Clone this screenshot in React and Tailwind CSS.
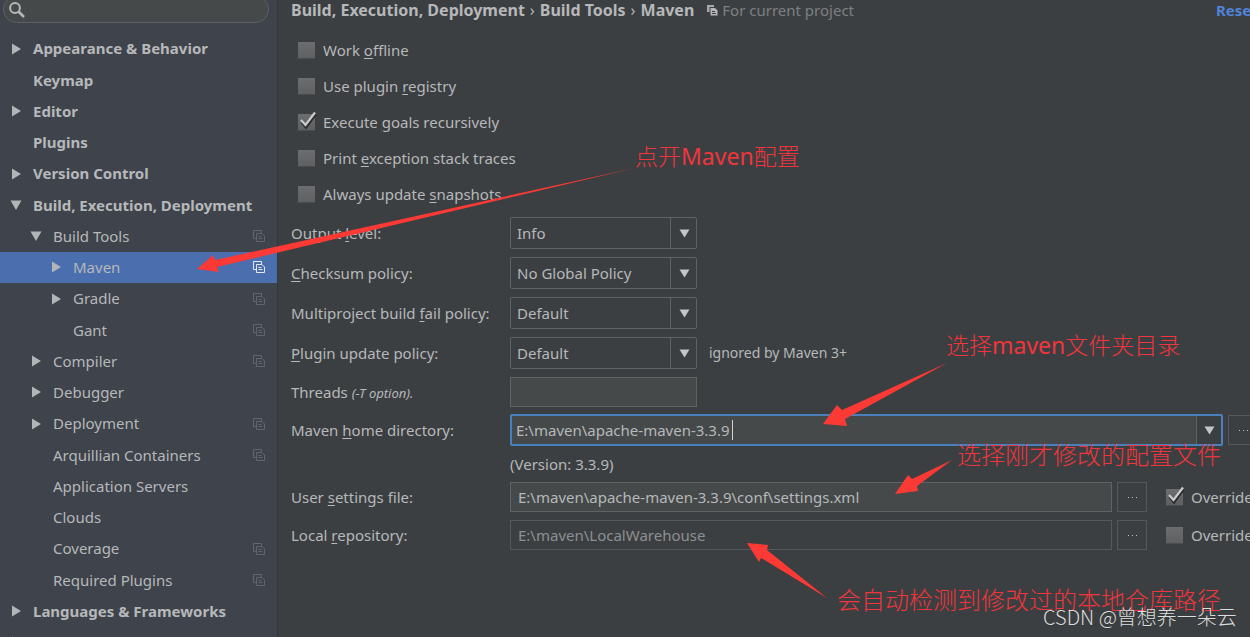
import { useState } from 'react';

const treeItems = [
  { label: 'Appearance & Behavior', level: 0, arrow: 'right' },
  { label: 'Keymap', level: 0 },
  { label: 'Editor', level: 0, arrow: 'right' },
  { label: 'Plugins', level: 0 },
  { label: 'Version Control', level: 0, arrow: 'right' },
  { label: 'Build, Execution, Deployment', level: 0, arrow: 'down' },
  { label: 'Build Tools', level: 1, arrow: 'down', project: true },
  { label: 'Maven', level: 2, arrow: 'right', project: true },
  { label: 'Gradle', level: 2, arrow: 'right', project: true },
  { label: 'Gant', level: 2, project: true },
  { label: 'Compiler', level: 1, arrow: 'right', project: true },
  { label: 'Debugger', level: 1, arrow: 'right' },
  { label: 'Deployment', level: 1, arrow: 'right', project: true },
  { label: 'Arquillian Containers', level: 1, project: true },
  { label: 'Application Servers', level: 1 },
  { label: 'Clouds', level: 1 },
  { label: 'Coverage', level: 1, project: true },
  { label: 'Required Plugins', level: 1, project: true },
  { label: 'Languages & Frameworks', level: 0, arrow: 'right' },
  { label: 'Tools', level: 0, arrow: 'right' },
];

const levelStyles = ['pl-[10px] font-bold', 'pl-[30px]', 'pl-[50px]'];

const checks = [
  { id: 'offline', text: ['Work ', 'o', 'ffline'] },
  { id: 'registry', text: ['Use plugin ', 'r', 'egistry'] },
  { id: 'recursive', text: ['Execute ', 'g', 'oals recursively'], checked: true },
  { id: 'traces', text: ['Print ', 'e', 'xception stack traces'] },
  { id: 'snapshots', text: ['Always update ', 's', 'napshots'] },
];

const selects = [
  { id: 'output', text: ['Output ', 'l', 'evel:'], value: 'Info' },
  { id: 'checksum', text: ['', 'C', 'hecksum policy:'], value: 'No Global Policy' },
  { id: 'fail', text: ['Multiproject build ', 'f', 'ail policy:'], value: 'Default' },
  { id: 'update', text: ['', 'P', 'lugin update policy:'], value: 'Default', hint: 'ignored by Maven 3+' },
];

function Mnemonic({ text }) {
  return (
    <>
      {text[0]}
      <span className="underline underline-offset-2">{text[1]}</span>
      {text[2]}
    </>
  );
}

function TreeArrow({ dir }) {
  return (
    <svg className="w-3 h-3 shrink-0" viewBox="0 0 12 12" fill="#b2b5b8">
      {dir === 'right' && <path d="M2 0.5 L11 6 L2 11.5 Z" />}
      {dir === 'down' && <path d="M0.5 1.5 H11.5 L6 11 Z" />}
    </svg>
  );
}

function ProjectIcon({ className }) {
  return (
    <svg className={className} viewBox="0 0 12 12" fill="none" stroke="currentColor">
      <path d="M3 8.5 H0.5 V0.5 H8.5 V3" />
      <path d="M3.5 3.5 H9 L11.5 6 V11.5 H3.5 Z M5.5 6.5 H8.5 M5.5 8.5 H9.5" />
    </svg>
  );
}

function CheckBox({ id, text, checked }) {
  const [on, setOn] = useState(Boolean(checked));
  return (
    <div className="flex items-center gap-2 whitespace-nowrap">
      <span className="relative w-[17px] h-[17px] shrink-0">
        <input
          id={id}
          type="checkbox"
          checked={on}
          onChange={(e) => setOn(e.target.checked)}
          className="block w-full h-full appearance-none bg-linear-to-b from-[#6b6d6e] to-[#5e6061] border-b border-[#4a4d4e]"
        />
        {on && (
          <svg className="absolute -top-1 left-0 w-5 h-5 pointer-events-none" viewBox="0 0 20 20" fill="none">
            <path d="M3.5 12 L8 17.5 L17.5 4.5" stroke="#2a2c2d" strokeWidth="2.5" />
            <path d="M3 10 L7.5 15 L17 2.5" stroke="#c9cbcc" strokeWidth="2.2" />
          </svg>
        )}
      </span>
      <label htmlFor={id}>
        <Mnemonic text={text} />
      </label>
    </div>
  );
}

function DownArrow() {
  return (
    <svg className="w-[11px] h-[9px]" viewBox="0 0 11 9" fill="#c3c5c6">
      <path d="M0.5 0.5 H10.5 L5.5 8.5 Z" />
    </svg>
  );
}

function DotsButton({ label }) {
  return (
    <button
      type="button"
      aria-label={label}
      className="w-[30px] h-[30px] shrink-0 flex items-center justify-center gap-[3px] border border-[#55595b]"
    >
      <i className="w-px h-px bg-[#c0c2c3]" />
      <i className="w-px h-px bg-[#c0c2c3]" />
      <i className="w-px h-px bg-[#c0c2c3]" />
    </button>
  );
}

function Sidebar() {
  return (
    <aside className="w-[278px] shrink-0 bg-[#3f434b] border-r border-[#35383b] overflow-hidden">
      <div className="relative -mt-1 ml-[3px] mr-2">
        <input
          type="search"
          aria-label="Search settings"
          className="block w-full h-[27px] pl-8 rounded-full border border-[#5e6263] bg-[#45494a] outline-none"
        />
        <svg className="absolute left-1.5 top-1.5 w-4 h-4" viewBox="0 0 16 16" fill="none" stroke="#b4b6b7">
          <circle cx="6" cy="6" r="4.9" strokeWidth="2" />
          <path d="M9.5 9.5 L15 15" strokeWidth="2.6" />
        </svg>
      </div>

      {/* 20 rows share the height */}
      <ul className="flex flex-col h-[625px] mt-[10px]">
        {treeItems.map(({ label, level, arrow, project }) => (
          <li
            key={label}
            className={`flex-1 flex items-center gap-[11px] pr-3 whitespace-nowrap ${levelStyles[level]} ${
              label === 'Maven' ? 'bg-[#4b6eaf]' : ''
            }`}
          >
            <TreeArrow dir={arrow} />
            <span className="flex-1">{label}</span>
            {project && (
              <ProjectIcon
                className={label === 'Maven' ? 'w-3 h-3 text-[#e4e8f0]' : 'w-3 h-3 text-[#62666c]'}
              />
            )}
          </li>
        ))}
      </ul>
    </aside>
  );
}

function Breadcrumbs() {
  return (
    <header className="flex items-center h-5 leading-5 whitespace-nowrap">
      <h1 className="flex gap-[5px] text-[16px] font-bold">
        <span>Build, Execution, Deployment</span>
        <span className="font-normal">›</span>
        <span>Build Tools</span>
        <span className="font-normal">›</span>
        <span>Maven</span>
      </h1>
      <svg className="w-3 h-3 ml-3" viewBox="0 0 12 12">
        <path d="M1 1 H8 V3 H3.5 V8 H1 Z" fill="#a6a8a9" />
        <path d="M4.5 4 H9 L11.5 6.5 V11.5 H4.5 Z" fill="#b4b6b7" />
        <path d="M6 7.5 H9 M6 9.5 H10" stroke="#3c3f41" />
      </svg>
      <span className="ml-1 flex-1 text-[#7d8082]">For current project</span>
      <a href="#reset" className="w-[34px] shrink-0 font-bold text-[#4f83dc]">
        Reset
      </a>
    </header>
  );
}

function MavenForm() {
  return (
    <form className="pt-3">
      {checks.map((c) => (
        <div key={c.id} className="h-9 pl-[7px] flex items-center">
          <CheckBox {...c} />
        </div>
      ))}

      <div className="flex flex-col gap-2 mt-[5px]">
        {selects.map(({ id, text, value, hint }) => (
          <div key={id} className="flex items-center h-8">
            <label htmlFor={id} className="w-[219px] shrink-0 whitespace-nowrap">
              <Mnemonic text={text} />
            </label>
            <div className="relative w-[187px] h-full">
              <select
                id={id}
                className="block w-full h-full pl-1.5 appearance-none rounded-xs border border-[#5f6364] bg-[#3c3f41]"
              >
                <option>{value}</option>
              </select>
              <span className="absolute right-0 inset-y-0 w-[27px] flex items-center justify-center border-l border-[#5f6364] pointer-events-none">
                <DownArrow />
              </span>
            </div>
            {hint && <span className="ml-3 text-sm">{hint}</span>}
          </div>
        ))}
      </div>

      <div className="flex items-center mt-2">
        <label htmlFor="threads" className="w-[219px] shrink-0">
          Threads <em className="text-[13px]">(-T option).</em>
        </label>
        <input id="threads" type="text" className="w-[187px] h-[30px] border border-[#5f6364] bg-[#45494a]" />
      </div>

      <div className="flex items-center mt-[7px] -mr-2">
        <label htmlFor="home" className="w-[219px] shrink-0">
          <Mnemonic text={['Maven ', 'h', 'ome directory:']} />
        </label>
        <div className="relative flex-1 flex h-8 rounded-xs border-2 border-[#4a80bd] bg-[#45494a]">
          <input
            id="home"
            type="text"
            defaultValue="E:\maven\apache-maven-3.3.9"
            className="flex-1 pl-1 outline-none"
          />
          <i className="absolute left-[220px] top-1 w-px h-5 bg-[#d0d2d3]" />
          <span className="w-[25px] flex items-center justify-center border-l border-[#5f6364] bg-[#3c3f41]">
            <DownArrow />
          </span>
        </div>
        <span className="ml-[5px]">
          <DotsButton label="Browse Maven home" />
        </span>
      </div>

      <p className="h-[36px] pl-[219px] flex items-center">(Version: 3.3.9)</p>

      <div className="flex items-center">
        <label htmlFor="settings" className="w-[219px] shrink-0">
          <Mnemonic text={['User ', 's', 'ettings file:']} />
        </label>
        <input
          id="settings"
          type="text"
          defaultValue="E:\maven\apache-maven-3.3.9\conf\settings.xml"
          className="flex-1 h-[30px] pl-[7px] mr-[5px] border border-[#5f6364] bg-[#45494a]"
        />
        <DotsButton label="Browse settings file" />
        <div className="w-[84px] ml-[19px] shrink-0">
          <CheckBox id="override-settings" text={['Override', '', '']} checked />
        </div>
      </div>

      <div className="flex items-center mt-2">
        <label htmlFor="repo" className="w-[219px] shrink-0">
          <Mnemonic text={['Local ', 'r', 'epository:']} />
        </label>
        <input
          id="repo"
          type="text"
          readOnly
          defaultValue="E:\maven\LocalWarehouse"
          className="flex-1 h-[30px] pl-[7px] mr-[5px] border border-[#55595b] text-[#8c8f90]"
        />
        <DotsButton label="Browse local repository" />
        <div className="w-[84px] ml-[19px] shrink-0">
          <CheckBox id="override-repo" text={['Override', '', '']} />
        </div>
      </div>
    </form>
  );
}

// red notes and arrows drawn on top of the dialog
function Annotations() {
  return (
    <div className="absolute inset-0 pointer-events-none whitespace-nowrap text-[23px] leading-8 font-light text-[#f0353d]">
      <svg className="absolute left-0 top-0 w-[1250px] h-[637px]" viewBox="0 0 1250 637" fill="#fb3a35">
        <path d="M197 269 L213 255 L215 260 L635 168 L217 267 L219 272 Z" />
        <path d="M823 424 L837 405 L842 410 L947 363 L845 419 L847 426 Z" />
        <path d="M895 494 L908 475 L912 479 L952 460 L917 486 L918 491 Z" />
        <path d="M747 543 L768 545 L767 550 L827 598 L761 558 L759 562 Z" />
      </svg>
      <span className="absolute left-[635px] top-[140px]">
        点开<span className="font-normal">Maven</span>配置
      </span>
      <span className="absolute left-[946px] top-[329px]">
        选择<span className="font-normal">maven</span>文件夹目录
      </span>
      <span className="absolute left-[957px] top-[439px] text-2xl leading-8">选择刚才修改的配置文件</span>
      <span className="absolute left-[837px] top-[584px] text-2xl leading-8">会自动检测到修改过的本地仓库路径</span>
      <span className="absolute left-[1043px] top-[601px] text-xl leading-8 text-[#dcddde] text-shadow-2xs font-['Noto_Sans_CJK_SC',sans-serif]">
        CSDN @曾想养一朵云
      </span>
    </div>
  );
}

export default function App() {
  return (
    <div className="relative flex h-screen overflow-hidden bg-[#3c3f41] text-[#b6b8ba] text-[15px] font-['Noto_Sans','Noto_Sans_CJK_SC',sans-serif]">
      <Sidebar />
      <main className="flex-1 min-w-0 pl-[13px] overflow-hidden">
        <Breadcrumbs />
        <MavenForm />
      </main>
      <Annotations />
    </div>
  );
}
